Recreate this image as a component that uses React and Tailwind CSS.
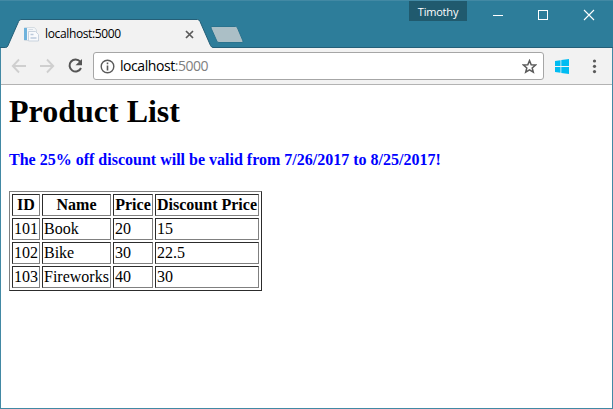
import React from "react";

const products = [
  { id: 101, name: "Book", price: 20, discount: 15 },
  { id: 102, name: "Bike", price: 30, discount: 22.5 },
  { id: 103, name: "Fireworks", price: 40, discount: 30 },
];

const cell =
  "h-[22px] border border-t-[#2c2c2c] border-l-[#2c2c2c] border-r-[#808080] border-b-[#808080] p-px leading-[18px] whitespace-nowrap";

function TabStrip() {
  return (
    <div className="relative flex h-[48px] shrink-0 items-start bg-[#2d7d9a]">
      <svg className="absolute inset-0" width="613" height="48" viewBox="0 0 613 48">
        <rect x="0" y="0" width="613" height="1" fill="#4289a4" />
        <rect x="0" y="47" width="613" height="1" fill="#245f78" />
        <path
          d="M1 47.5H5.5Q7 47.5 7.8 46L18.6 21.5Q19.4 19.5 21 19.5H197.5Q199.2 19.5 200 21.5L210.5 45.5Q211.5 47.5 213 47.5V48H1Z"
          fill="#f2f2f2"
        />
        <path
          d="M1 47.5H5.5Q7 47.5 7.8 46L18.6 21.5Q19.4 19.5 21 19.5H197.5Q199.2 19.5 200 21.5L210.5 45.5Q211.5 47.5 213 47.5"
          fill="none"
          stroke="#245f78"
        />
        <path
          d="M212 26.5H235.5Q236.800 26.5 237.400 27.8L243 41Q243.5 42.5 242 42.5H219Q217.5 42.5 216.9 41.2L211 28Q210.5 26.5 212 26.5Z"
          fill="#abbfc6"
          stroke="#2a738e"
        />
      </svg>

      <div className="relative ml-[23px] mt-[26px] flex h-4 w-[175px] items-center">
        <svg width="17" height="16" viewBox="0 0 17 16">
          <path d="M1.5 1.5H11.5L13.5 4V14.5H1.5Z" fill="#f3f6f8" stroke="#d5dce2" />
          <rect x="1" y="2" width="3" height="12" fill="#6fb3dc" />
          <path d="M5.5 3.500H10" stroke="#d5dce4" />
          <path d="M5.500 5.500H12.500L15.500 8.500V15H5.500Z" fill="#f8fafc" stroke="#c9d3de" />
          <path d="M7.500 8.500H10.500M7.500 12H13.500" stroke="#bccadb" strokeWidth="1.500" />
        </svg>
        <span className="ml-[5px] w-[77px] whitespace-nowrap font-['Open_Sans',sans-serif] text-[12px] leading-4 tracking-[-0.36px] text-black">
          localhost:5000
        </span>
        <svg className="ml-auto mr-[4px]" width="9" height="9" viewBox="0 0 9 9">
          <path d="M1 1L8 8M8 1L1 8" stroke="#5a5a5a" strokeWidth="1.7" />
        </svg>
      </div>

      <div className="relative ml-auto flex items-start">
        <div className="mr-[25px] mt-px flex h-5 w-[58px] items-center justify-center bg-[#205a6e] font-['Open_Sans',sans-serif] text-[11px] leading-none tracking-[-0.2px] text-white">
          Timothy
        </div>
        <svg className="mt-[9px]" width="121" height="12" viewBox="0 0 121 12" fill="none" stroke="#fff">
          <path d="M1 6.5H11" />
          <rect x="46.5" y="1.5" width="9" height="9" />
          <path d="M92 1L102 11M102 1L92 11" strokeWidth="1.1" />
        </svg>
      </div>
    </div>
  );
}

function Toolbar() {
  return (
    <div className="flex h-[37px] shrink-0 items-center border-b border-[#b3b3b3] bg-[#f2f2f2] pl-[10px]">
      <svg width="82" height="18" viewBox="0 0 82 18" fill="none">
        <path d="M15 9H2M8 2.5L1.8 9L8 15.5" stroke="#cfcfcf" strokeWidth="1.9" />
        <path d="M29 9H42M36 2.5L42.2 9L36 15.5" stroke="#cfcfcf" strokeWidth="1.9" />
        <path d="M69.2 4.7A6 6 0 1 0 70 11" stroke="#555" strokeWidth="2" />
        <path d="M71 2V8.3H64.5Z" fill="#555" />
      </svg>
      <div className="flex h-7 w-[451px] items-center rounded-[3px] border border-[#a6a6a6] bg-white pl-[6px] pr-[6px]">
        <svg width="15" height="15" viewBox="0 0 15 15" fill="none">
          <circle cx="7.5" cy="7.5" r="6.3" stroke="#5a5a5a" strokeWidth="1.4" />
          <path d="M7.5 3.5V5.2M7.5 6.5V11.5" stroke="#5a5a5a" strokeWidth="1.6" />
        </svg>
        <span className="ml-[5px] whitespace-nowrap font-['Open_Sans',sans-serif] text-[14px] leading-5 tracking-[-0.44px] text-black">
          localhost<span className="text-[#808080]">:5000</span>
        </span>
        <svg className="ml-auto" width="15" height="15" viewBox="0 0 15 15">
          <path
            d="M7.5 1.6L9.2 5.7L13.6 6L10.2 8.9L11.3 13.2L7.5 10.9L3.7 13.2L4.8 8.9L1.4 6L5.8 5.7Z"
            fill="none"
            stroke="#5a5a5a"
            strokeWidth="1.5"
          />
        </svg>
      </div>
      <svg className="ml-[11px]" width="14" height="15" viewBox="0 0 14 15" fill="#00bcf2">
        <path d="M0 2L5.5 1.2V7H0ZM6.3 1.1L14 0V7H6.3ZM0 8H5.5V13.8L0 13ZM6.3 8H14V15L6.3 13.9Z" />
      </svg>
      <svg className="ml-[23px]" width="5" height="15" viewBox="0 0 5 15" fill="#5a5a5a">
        <circle cx="2.5" cy="2" r="1.6" />
        <circle cx="2.5" cy="7.3" r="1.6" />
        <circle cx="2.5" cy="12.6" r="1.6" />
      </svg>
    </div>
  );
}

export default function App() {
  return (
    <div className="flex h-[409px] w-[613px] flex-col overflow-hidden bg-white">
      <TabStrip />
      <div className="flex flex-1 flex-col border-x border-b border-[#4289a4]">
        <Toolbar />
        <main className="px-2 pt-2 font-['Liberation_Serif',serif] text-[16px] text-black">
          <h1 className="text-[32px] font-bold leading-[37px]">Product List</h1>
          <p className="mt-[21px] font-bold leading-[18px] text-[#0000ff]">
            The 25% off discount will be valid from 7/26/2017 to 8/25/2017!
          </p>
          <table className="mt-[22px] w-[253px] table-fixed border-separate border-spacing-[2px] border border-t-[#808080] border-l-[#808080] border-r-[#2c2c2c] border-b-[#2c2c2c]">
            <colgroup>
              <col className="w-[28px]" />
              <col className="w-[69px]" />
              <col className="w-[40px]" />
              <col className="w-[104px]" />
            </colgroup>
            <thead>
              <tr>
                <th className={cell}>ID</th>
                <th className={cell}>Name</th>
                <th className={cell}>Price</th>
                <th className={cell}>Discount Price</th>
              </tr>
            </thead>
            <tbody>
              {products.map((p) => (
                <tr key={p.id}>
                  <td className={cell}>{p.id}</td>
                  <td className={cell}>{p.name}</td>
                  <td className={cell}>{p.price}</td>
                  <td className={cell}>{p.discount}</td>
                </tr>
              ))}
            </tbody>
          </table>
        </main>
      </div>
    </div>
  );
}
